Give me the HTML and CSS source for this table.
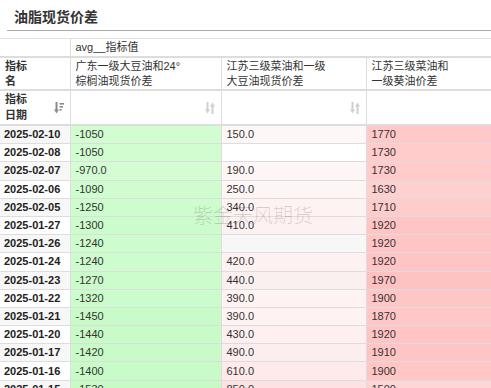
FILE: index.html
```html
<!DOCTYPE html>
<html lang="zh">
<head>
<meta charset="utf-8">
<link rel="stylesheet" href="styles.css">
</head>
<body>
<div class="page">
  <div class="title-bar"><h1 class="title">油脂现货价差</h1></div>
  <table class="pivot">
    <colgroup>
      <col class="c1"><col class="c2"><col class="c3"><col class="c4">
    </colgroup>
    <thead>
      <tr class="h1">
        <th></th>
        <th colspan="3" class="plain">avg__指标值</th>
      </tr>
      <tr class="h2">
        <th class="lab">指标<br>名</th>
        <th class="plain">广东一级大豆油和24°<br>棕榈油现货价差</th>
        <th class="plain">江苏三级菜油和一级<br>大豆油现货价差</th>
        <th class="plain">江苏三级菜油和<br>一级葵油价差</th>
      </tr>
      <tr class="h3">
        <th class="lab"><div class="sortcell"><span>指标<br>日期</span>
          <svg class="ico active" viewBox="0 0 10 12" width="10" height="12"><rect x="1.5" y="0" width="2" height="8"/><polygon points="0,7.5 5,7.5 2.5,11.5"/><rect x="5.5" y="1" width="4.5" height="1.6"/><rect x="5.5" y="4" width="3.5" height="1.6"/><rect x="5.5" y="7" width="2.2" height="1.6"/></svg></div></th>
        <th><div class="sortcell"><span></span><svg class="ico" viewBox="0 0 10 12" width="10" height="12"><rect x="1.5" y="0" width="2" height="8"/><polygon points="0,7.5 5,7.5 2.5,11.5"/><rect x="6.5" y="4" width="2" height="8"/><polygon points="5,4.5 10,4.5 7.5,0.5"/></svg></div></th>
        <th><div class="sortcell"><span></span><svg class="ico" viewBox="0 0 10 12" width="10" height="12"><rect x="1.5" y="0" width="2" height="8"/><polygon points="0,7.5 5,7.5 2.5,11.5"/><rect x="6.5" y="4" width="2" height="8"/><polygon points="5,4.5 10,4.5 7.5,0.5"/></svg></div></th>
        <th><div class="sortcell"><span></span><svg class="ico" viewBox="0 0 10 12" width="10" height="12"><rect x="1.5" y="0" width="2" height="8"/><polygon points="0,7.5 5,7.5 2.5,11.5"/><rect x="6.5" y="4" width="2" height="8"/><polygon points="5,4.5 10,4.5 7.5,0.5"/></svg></div></th>
      </tr>
    </thead>
    <tbody>
      <tr><td class="d">2025-02-10</td><td class="g" style="background:rgb(209,253,209)">-1050</td><td class="p" style="background:rgb(254,247,247)">150.0</td><td class="r" style="background:rgb(255,201,201)">1770</td></tr>
      <tr><td class="d">2025-02-08</td><td class="g" style="background:rgb(209,253,209)">-1050</td><td class="p"></td><td class="r" style="background:rgb(255,203,203)">1730</td></tr>
      <tr><td class="d">2025-02-07</td><td class="g" style="background:rgb(212,253,212)">-970.0</td><td class="p" style="background:rgb(254,246,246)">190.0</td><td class="r" style="background:rgb(255,203,203)">1730</td></tr>
      <tr><td class="d">2025-02-06</td><td class="g" style="background:rgb(208,253,208)">-1090</td><td class="p" style="background:rgb(254,245,245)">250.0</td><td class="r" style="background:rgb(255,208,208)">1630</td></tr>
      <tr><td class="d">2025-02-05</td><td class="g" style="background:rgb(205,252,205)">-1250</td><td class="p" style="background:rgb(254,243,243)">340.0</td><td class="r" style="background:rgb(255,204,204)">1710</td></tr>
      <tr><td class="d">2025-01-27</td><td class="g" style="background:rgb(204,252,204)">-1300</td><td class="p" style="background:rgb(254,241,241)">410.0</td><td class="r" style="background:rgb(255,197,197)">1920</td></tr>
      <tr><td class="d">2025-01-26</td><td class="g" style="background:rgb(205,252,205)">-1240</td><td class="p"></td><td class="r" style="background:rgb(255,197,197)">1920</td></tr>
      <tr><td class="d">2025-01-24</td><td class="g" style="background:rgb(205,252,205)">-1240</td><td class="p" style="background:rgb(254,241,241)">420.0</td><td class="r" style="background:rgb(255,197,197)">1920</td></tr>
      <tr><td class="d">2025-01-23</td><td class="g" style="background:rgb(204,252,204)">-1270</td><td class="p" style="background:rgb(251,240,240)">440.0</td><td class="r" style="background:rgb(255,194,194)">1970</td></tr>
      <tr><td class="d">2025-01-22</td><td class="g" style="background:rgb(203,252,203)">-1320</td><td class="p" style="background:rgb(254,242,242)">390.0</td><td class="r" style="background:rgb(255,198,198)">1900</td></tr>
      <tr><td class="d">2025-01-21</td><td class="g" style="background:rgb(200,251,200)">-1450</td><td class="p" style="background:rgb(254,242,242)">390.0</td><td class="r" style="background:rgb(255,199,199)">1870</td></tr>
      <tr><td class="d">2025-01-20</td><td class="g" style="background:rgb(200,251,200)">-1440</td><td class="p" style="background:rgb(254,240,240)">430.0</td><td class="r" style="background:rgb(255,197,197)">1920</td></tr>
      <tr><td class="d">2025-01-17</td><td class="g" style="background:rgb(201,251,201)">-1420</td><td class="p" style="background:rgb(252,238,238)">490.0</td><td class="r" style="background:rgb(255,197,197)">1910</td></tr>
      <tr><td class="d">2025-01-16</td><td class="g" style="background:rgb(201,251,201)">-1400</td><td class="p" style="background:rgb(254,234,234)">610.0</td><td class="r" style="background:rgb(255,198,198)">1900</td></tr>
      <tr><td class="d">2025-01-15</td><td class="g" style="background:rgb(198,251,198)">-1530</td><td class="p" style="background:rgb(254,226,226)">850.0</td><td class="r" style="background:rgb(255,214,214)">1500</td></tr>
    </tbody>
  </table>
  <div class="watermark">紫金天风期货</div>
</div>
</body>
</html>
```

FILE: styles.css
```css
html, body {
  margin: 0;
  padding: 0;
  background: #fff;
}
.page {
  position: relative;
  width: 491px;
  height: 388px;
  overflow: hidden;
  font-family: "Liberation Sans", Arial, "Noto Sans CJK SC", sans-serif;
  font-size: 11px;
  color: #333;
}
.title-bar {
  margin-left: 7px;
  height: 30px;
  border-bottom: 1px solid #aaa;
  padding-left: 7px;
  display: flex;
  align-items: center;
  margin-bottom: 7px;
}
.title {
  margin: 0;
  font-family: "Noto Sans CJK SC", sans-serif;
  font-size: 14px;
  font-weight: 700;
  color: #333;
  line-height: 16px;
  padding-top: 2px;
}
.pivot {
  border-collapse: collapse;
  table-layout: fixed;
  width: 520px;
}
.c1 { width: 70px; }
.c2 { width: 151px; }
.c3 { width: 145px; }
.c4 { width: 154px; }
.pivot th, .pivot td {
  border: 1px solid #ddd;
  padding: 0 5px;
  text-align: left;
  font-weight: normal;
  white-space: nowrap;
  overflow: hidden;
}
.pivot th:first-child, .pivot td:first-child { border-left: none; }
.pivot thead th { background: #fff; }
.h1 th { height: 17px; line-height: 17px; border-bottom-width: 2px; border-top-color: #e2e2e2; }
.h2 th { height: 31px; line-height: 14.5px; border-bottom-width: 2px; }
.h3 th { height: 33px; line-height: 15.5px; border-bottom-width: 2px; }
.lab { font-weight: 700 !important; color: #333; }
.sortcell {
  display: flex;
  align-items: center;
  justify-content: space-between;
}
.ico { fill: #d0d0d0; flex: none; margin-right: 1px; }
.ico.active { fill: #8a8a8a; }
.pivot td {
  height: 17.2px;
  line-height: 17px;
  color: #333;
}
.pivot td.d {
  font-weight: 700;
  color: #222;
  padding-left: 4px;
}
.pivot tbody tr:nth-child(odd) td.d,
.pivot tbody tr:nth-child(odd) td.p:empty { background: #f7f7f7; }
.watermark {
  position: absolute;
  left: 193px;
  top: 203px;
  font-family: "Noto Sans CJK SC", sans-serif;
  font-size: 20px;
  font-weight: 300;
  color: rgba(0, 0, 0, 0.16);
  line-height: 24px;
  pointer-events: none;
}
```
